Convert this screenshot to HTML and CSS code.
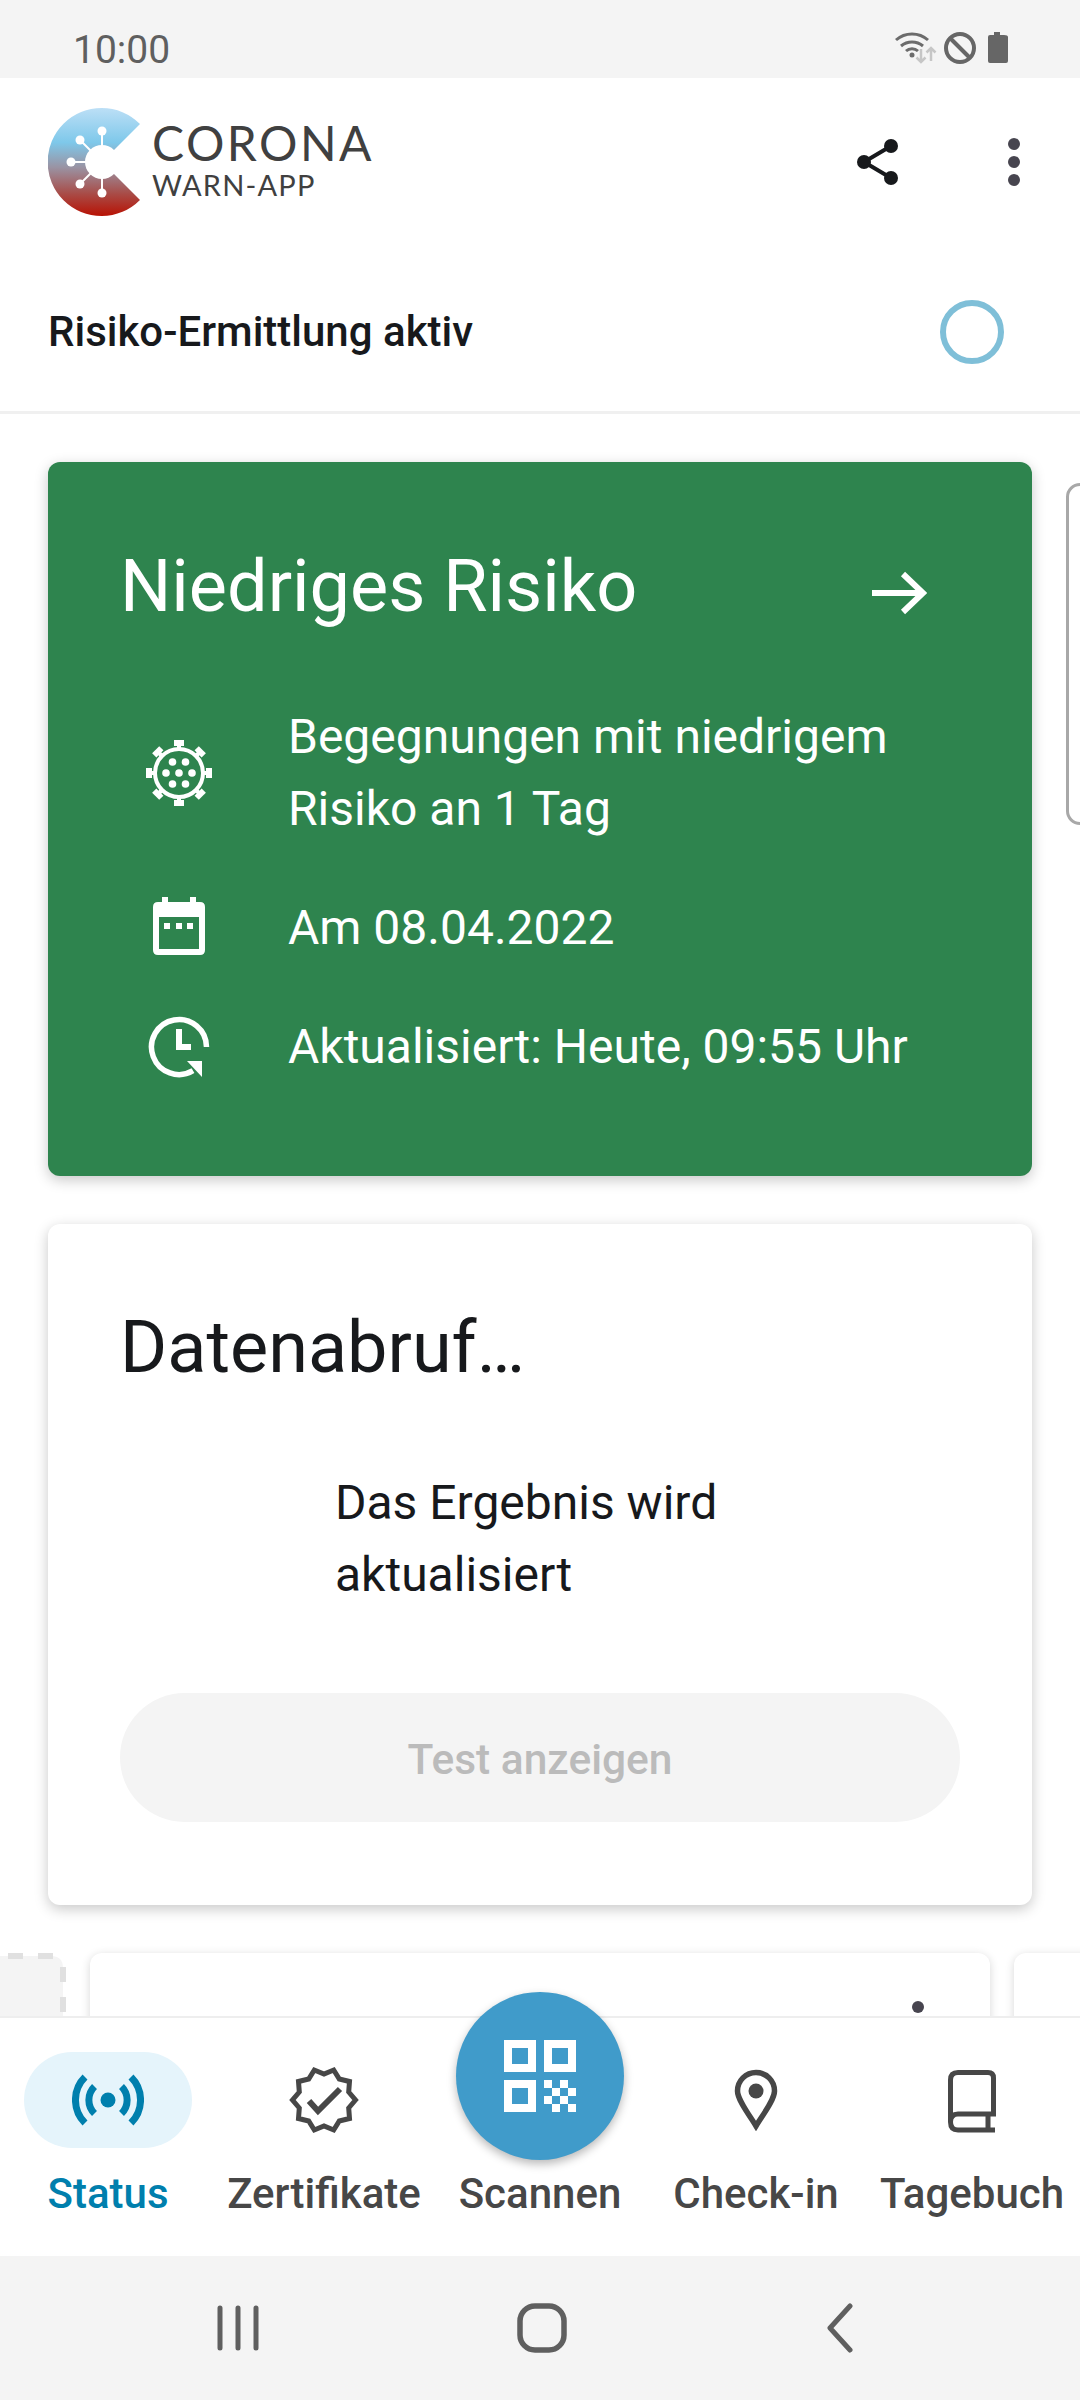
FILE: index.html
```html
<!DOCTYPE html>
<html lang="de">
<head>
    <meta charset="UTF-8">
    <title>Corona-Warn-App</title>
    <link rel="stylesheet" href="styles.css">
</head>
<body>
<div class="phone">

    <!-- Statusleiste -->
    <div class="statusbar">
        <span class="time">10:00</span>
        <svg class="status-icons" width="120" height="36" viewBox="0 0 120 36">
            <g fill="none" stroke="#6b6b6b" stroke-width="3">
                <path d="M1 10 A24 24 0 0 1 33 10"/>
                <path d="M6 16 A17 17 0 0 1 28 16"/>
                <path d="M11 21 A9 9 0 0 1 23 21"/>
            </g>
            <circle cx="17" cy="25" r="2.5" fill="#6b6b6b"/>
            <g fill="none" stroke="#c6c6c6" stroke-width="2.5">
                <path d="M26 19 V32 M21.5 27.5 L26 32 L30.5 27.5"/>
                <path d="M36 31 V18 M31.5 22.5 L36 18 L40.500 22.500"/>
            </g>
            <circle cx="65" cy="18" r="14" fill="none" stroke="#666" stroke-width="4"/>
            <path d="M55 8 L75 28" stroke="#666" stroke-width="4"/>
            <path d="M99 2 H105 V5 H109 Q113 5 113 7 V31 Q113 33 111 33 H95 Q93 33 93 31 V7 Q93 5 95 5 H99 Z" fill="#666"/>
        </svg>
    </div>

    <!-- Kopfbereich -->
    <header class="app-header">
        <div class="top-row">
            <svg class="logo" width="94" height="108" viewBox="0 0 94 108">
                <defs>
                    <linearGradient id="logoGrad" x1="0" y1="0" x2="0" y2="1">
                        <stop offset="0" stop-color="#bcdff6"/>
                        <stop offset="0.32" stop-color="#7ec8ea"/>
                        <stop offset="0.55" stop-color="#9a93a3"/>
                        <stop offset="0.8" stop-color="#a94a45"/>
                        <stop offset="1" stop-color="#b81204"/>
                    </linearGradient>
                </defs>
                <path d="M92 16 A54 54 0 1 0 92 92 L54 54 Z" fill="url(#logoGrad)"/>
                <g stroke="#fff" stroke-width="2">
                    <path d="M54 54 V23 M54 54 L32 32 M54 54 H23 M54 54 L32 76 M54 54 V85"/>
                </g>
                <g fill="#fff">
                    <circle cx="54" cy="54" r="17"/>
                    <circle cx="54" cy="23" r="4.500"/>
                    <circle cx="32" cy="32" r="4.500"/>
                    <circle cx="23" cy="54" r="4.500"/>
                    <circle cx="32" cy="76" r="4.500"/>
                    <circle cx="54" cy="85" r="4.500"/>
                </g>
            </svg>
            <div class="wordmark">
                <span class="wordmark-big">CORONA</span>
                <span class="wordmark-small">WARN-APP</span>
            </div>
            <svg class="share-icon" width="44" height="48" viewBox="0 0 44 48">
                <path d="M36 8 L9 24 L36 40" fill="none" stroke="#17191c" stroke-width="4"/>
                <circle cx="36" cy="8" r="7" fill="#17191c"/>
                <circle cx="9" cy="24" r="7" fill="#17191c"/>
                <circle cx="36" cy="40" r="7" fill="#17191c"/>
            </svg>
            <div class="more-dots"><i></i><i></i><i></i></div>
        </div>
        <div class="tracing-row">
            <span class="tracing-label">Risiko-Ermittlung aktiv</span>
            <div class="tracing-ring"></div>
        </div>
    </header>

    <!-- Inhalt -->
    <main class="content">
        <div class="risk-line">
            <section class="card card-green">
                <div class="card-title-row">
                    <h1 class="card-title">Niedriges Risiko</h1>
                    <svg class="arrow-icon" width="56" height="44" viewBox="0 0 56 44">
                        <path d="M1 22 H52 M32 3 L52 22 L32 41" fill="none" stroke="#fff" stroke-width="6"/>
                    </svg>
                </div>
                <div class="risk-rows">
                    <svg width="68" height="68" viewBox="-34 -34 68 68" class="risk-icon">
                        <circle r="24" fill="none" stroke="#fff" stroke-width="4"/>
                        <g fill="#fff">
                            <g id="spike"><rect x="-2" y="-30" width="4" height="7"/><rect x="-5" y="-33" width="10" height="6"/></g>
                            <use href="#spike" transform="rotate(45)"/>
                            <use href="#spike" transform="rotate(90)"/>
                            <use href="#spike" transform="rotate(135)"/>
                            <use href="#spike" transform="rotate(180)"/>
                            <use href="#spike" transform="rotate(225)"/>
                            <use href="#spike" transform="rotate(270)"/>
                            <use href="#spike" transform="rotate(315)"/>
                            <circle r="3.800"/>
                            <circle cx="-13" r="3.800"/>
                            <circle cx="13" r="3.800"/>
                            <circle cx="-6.500" cy="-11" r="3.800"/>
                            <circle cx="6.500" cy="-11" r="3.800"/>
                            <circle cx="-6.500" cy="11" r="3.800"/>
                            <circle cx="6.500" cy="11" r="3.800"/>
                        </g>
                    </svg>
                    <p class="risk-text">Begegnungen mit niedrigem<br>Risiko an 1 Tag</p>

                    <svg width="52" height="58" viewBox="0 0 52 58" class="risk-icon calendar-icon">
                        <path fill="#fff" fill-rule="evenodd" d="M9 0 H15 V5 H37 V0 H43 V5 H47 Q52 5 52 10 V53 Q52 58 47 58 H5 Q0 58 0 53 V10 Q0 5 5 5 H9 Z M6 20 V52 H46 V20 Z"/>
                        <rect x="11" y="26" width="6" height="6" fill="#fff"/>
                        <rect x="23" y="26" width="6" height="6" fill="#fff"/>
                        <rect x="34" y="26" width="6" height="6" fill="#fff"/>
                    </svg>
                    <p class="risk-text">Am 08.04.2022</p>

                    <svg width="62" height="62" viewBox="0 0 62 62" class="risk-icon">
                        <path d="M58.500 31 A27.500 27.500 0 1 0 45 54.700" fill="none" stroke="#fff" stroke-width="5.500"/>
                        <path d="M54 45 V61 L39 45 Z" fill="#fff"/>
                        <path d="M28 13 V34 H43 V28 H34 V13 Z" fill="#fff"/>
                    </svg>
                    <p class="risk-text">Aktualisiert: Heute, 09:55 Uhr</p>
                </div>
            </section>
            <div class="card-peek"></div>
        </div>

        <section class="card card-white">
            <h2 class="card-title">Datenabruf…</h2>
            <p class="fetch-text">Das Ergebnis wird<br>aktualisiert</p>
            <div class="btn-disabled">Test anzeigen</div>
        </section>

        <div class="tile-row">
            <svg class="tile-add" width="68" height="70" viewBox="0 0 68 70">
                <path d="M0 3 H51 Q63 3 63 15 V70 H0 Z" fill="#f4f4f4"/>
                <path d="M8 3 H23 M38 3 H53 M63 14 V29 M63 44 V59" fill="none" stroke="#e0e0e0" stroke-width="6"/>
            </svg>
            <div class="tile">
                <div class="more-dots"><i></i><i></i><i></i></div>
            </div>
            <div class="tile"></div>
        </div>
    </main>

    <!-- Untere Navigation -->
    <nav class="bottom-nav">
        <div class="nav-item nav-active">
            <div class="nav-icon">
                <svg width="72" height="56" viewBox="-36 -28 72 56">
                    <circle r="7.500" fill="#007fad"/>
                    <g fill="none" stroke="#007fad" stroke-width="7">
                        <path d="M13.500 -13.500 A19 19 0 0 1 13.500 13.500"/>
                        <path d="M-13.500 -13.500 A19 19 0 0 0 -13.500 13.500"/>
                        <path d="M23 -23 A32.500 32.500 0 0 1 23 23"/>
                        <path d="M-23 -23 A32.500 32.500 0 0 0 -23 23"/>
                    </g>
                </svg>
            </div>
            <span class="nav-label">Status</span>
        </div>
        <div class="nav-item">
            <div class="nav-icon">
                <svg width="76" height="72" viewBox="-38 -36 76 72">
                    <polygon fill="none" stroke="#474747" stroke-width="5" points="31.500,0 24.700,8 25.500,18.500 15.300,21 9.700,30 0,26 -9.700,30 -15.300,21 -25.500,18.500 -24.700,8 -31.500,0 -24.700,-8 -25.500,-18.500 -15.300,-21 -9.700,-30 0,-26 9.700,-30 15.300,-21 25.500,-18.500 24.700,-8"/>
                    <path d="M-15 1 L-6 11 L16 -11" fill="none" stroke="#474747" stroke-width="6"/>
                </svg>
            </div>
            <span class="nav-label">Zertifikate</span>
        </div>
        <div class="nav-item">
            <div class="nav-icon"></div>
            <span class="nav-label">Scannen</span>
        </div>
        <div class="nav-item">
            <div class="nav-icon">
                <svg width="44" height="62" viewBox="-22 -22 44 62">
                    <path d="M0 35 C-6 25 -18.500 9 -18.500 0 A18.500 18.500 0 0 1 18.500 0 C18.500 9 6 25 0 35 Z" fill="none" stroke="#474747" stroke-width="5.500"/>
                    <circle r="7.500" fill="#474747"/>
                </svg>
            </div>
            <span class="nav-label">Check-in</span>
        </div>
        <div class="nav-item">
            <div class="nav-icon">
                <svg width="50" height="66" viewBox="0 0 50 66">
                    <path d="M11 5.500 H41 Q46.500 5.500 46.500 11 V47 H11 Q3.500 47 3.500 55 Q3.500 63 11 63 H48 M11 5.500 Q3.500 5.500 3.500 13 V55 M41 47 V61" fill="none" stroke="#474747" stroke-width="5"/>
                </svg>
            </div>
            <span class="nav-label">Tagebuch</span>
        </div>

        <div class="fab">
            <svg width="72" height="72" viewBox="0 0 72 72">
                <path fill="#fff" fill-rule="evenodd" d="M0 0 H32 V32 H0 Z M8 8 V24 H24 V8 Z M40 0 H72 V32 H40 Z M48 8 V24 H64 V8 Z M0 40 H32 V72 H0 Z M8 48 V64 H24 V48 Z"/>
                <path fill="#fff" d="M40 40 H48 V48 H40 Z M56 40 H64 V48 H56 Z M48 48 H56 V56 H48 Z M64 48 H72 V56 H64 Z M40 56 H48 V64 H40 Z M56 56 H64 V64 H56 Z M48 64 H56 V72 H48 Z M64 64 H72 V72 H64 Z"/>
            </svg>
        </div>
    </nav>

    <!-- Systemleiste -->
    <div class="systembar">
        <svg width="42" height="46" viewBox="0 0 42 46">
            <path d="M3 3 V43 M21 3 V43 M39 3 V43" stroke="#5f5f5f" stroke-width="5" stroke-linecap="round"/>
        </svg>
        <svg width="50" height="50" viewBox="0 0 50 50">
            <rect x="3" y="3" width="44" height="44" rx="15" fill="none" stroke="#5f5f5f" stroke-width="5.500"/>
        </svg>
        <svg width="30" height="50" viewBox="0 0 30 50">
            <path d="M25 3 L5 25 L25 47" fill="none" stroke="#5f5f5f" stroke-width="5" stroke-linecap="round" stroke-linejoin="round"/>
        </svg>
    </div>
</div>
</body>
</html>
```
FILE: styles.css
```css
/* Grundlayout */
* {
    box-sizing: border-box;
}

body {
    margin: 0;
    background: #fff;
    font-family: Roboto, "Noto Sans", sans-serif;
    color: #17191c;
}

.phone {
    width: 1080px;
    height: 2400px;
    display: flex;
    flex-direction: column;
    overflow: hidden;
}

/* Statusleiste */
.statusbar {
    height: 78px;
    flex: none;
    background: #f4f4f4;
    display: flex;
    align-items: center;
    justify-content: space-between;
    padding: 16px 65px 0 73px;
}

.time {
    margin-top: 5px;
    font-size: 39px;
    line-height: 44px;
    color: #5f5f5f;
}

.status-icons {
    margin-top: 2px;
}

/* Kopfbereich */
.app-header {
    flex: none;
    height: 336px;
    border-bottom: 3px solid #f0f0f0;
}

.top-row {
    display: flex;
    align-items: center;
    padding: 30px 0 0 48px;
    height: 138px;
}

.wordmark {
    display: flex;
    flex-direction: column;
    margin: -4px 0 0 10px;
    font-family: Lato, sans-serif;
    color: #404040;
}

.wordmark-big {
    font-size: 48px;
    line-height: 50px;
    letter-spacing: 2.5px;
}

.wordmark-small {
    font-size: 29px;
    line-height: 34px;
    letter-spacing: 1.2px;
}

.share-icon {
    margin-left: auto;
}

.more-dots {
    display: flex;
    flex-direction: column;
    gap: 6px;
}

.more-dots i {
    width: 12px;
    height: 12px;
    border-radius: 50%;
    background: #47454f;
}

.top-row .more-dots {
    margin: 0 60px 0 109px;
}

.tracing-row {
    display: flex;
    align-items: center;
    justify-content: space-between;
    height: 120px;
    margin-top: 56px;
    padding: 0 76px 0 48px;
}

.tracing-label {
    font-size: 42px;
    font-weight: 500;
    line-height: 48px;
}

.tracing-ring {
    width: 64px;
    height: 64px;
    border: 6.500px solid #7fbfd8;
    border-radius: 50%;
}

/* Inhalt */
.content {
    flex: 1;
    min-height: 0;
    overflow: hidden;
    padding: 48px 0 0 48px;
}

.risk-line {
    display: flex;
    align-items: flex-start;
    width: 1200px;
}

.card {
    width: 984px;
    flex: none;
    border-radius: 12px;
    padding: 84px 72px 0 70px;
    box-shadow: 0 4px 14px rgba(0, 0, 0, 0.22);
}

.card-green {
    height: 714px;
    padding-top: 85px;
    background: #2e844e;
    color: #fff;
}

.card-white {
    height: 681px;
    margin-top: 48px;
    background: #fff;
}

.card-title-row {
    display: flex;
    align-items: center;
    justify-content: space-between;
    padding-right: 33px;
}

.card-title {
    margin: 0 0 0 2px;
    font-size: 72px;
    font-weight: 400;
    line-height: 80px;
}

.arrow-icon {
    margin-top: 12px;
}

.risk-rows {
    display: grid;
    grid-template-columns: 122px 1fr;
    column-gap: 48px;
    row-gap: 47px;
    align-items: center;
    margin-top: 74px;
}

.risk-icon {
    justify-self: center;
}

.calendar-icon {
    margin-top: -5px;
}

.risk-text {
    margin: 0;
    font-size: 48px;
    line-height: 72px;
}

.card-peek {
    width: 200px;
    height: 342px;
    margin: 21px 0 0 34px;
    border: 3px solid #a8a8a8;
    border-radius: 14px;
    background: #fff;
}

.fetch-text {
    margin: 79px 0 0 217px;
    font-size: 48px;
    line-height: 72px;
}

.btn-disabled {
    height: 129px;
    margin: 82px 0 0 2px;
    border-radius: 65px;
    background: #f4f4f4;
    color: #bbb;
    font-size: 42.500px;
    font-weight: 500;
    line-height: 133px;
    text-align: center;
}

/* Kacheln unten */
.tile-row {
    display: flex;
    align-items: flex-start;
    margin: 48px 0 0 -48px;
    width: 1200px;
}

.tile-add {
    flex: none;
}

.tile {
    flex: none;
    width: 900px;
    height: 200px;
    margin-left: 22px;
    padding: 48px 0 0 822px;
    border-radius: 12px;
    background: #fff;
    box-shadow: 0 2px 10px rgba(0, 0, 0, 0.16);
}

.tile + .tile {
    margin-left: 24px;
}

/* Untere Navigation */
.bottom-nav {
    position: relative;
    flex: none;
    height: 240px;
    display: grid;
    grid-template-columns: repeat(5, 216px);
    background: #fff;
    border-top: 2px solid #eee;
}

.nav-item {
    display: flex;
    flex-direction: column;
    align-items: center;
    padding-top: 34px;
}

.nav-icon {
    width: 168px;
    height: 96px;
    border-radius: 48px;
    display: flex;
    align-items: center;
    justify-content: center;
}

.nav-active .nav-icon {
    background: #e5f4fb;
}

.nav-label {
    margin-top: 21px;
    font-size: 42px;
    font-weight: 500;
    line-height: 50px;
    color: #474747;
    white-space: nowrap;
}

.nav-active .nav-label {
    color: #007fad;
}

.fab {
    position: absolute;
    top: -26px;
    left: 456px;
    width: 168px;
    height: 168px;
    border-radius: 50%;
    background: #409bca;
    box-shadow: 0 4px 10px rgba(0, 0, 0, 0.28);
    display: flex;
    align-items: center;
    justify-content: center;
}

/* Systemleiste */
.systembar {
    flex: none;
    height: 144px;
    background: #f4f4f4;
    display: flex;
    align-items: center;
    gap: 258px;
    padding: 0 0 0 217px;
}
```
